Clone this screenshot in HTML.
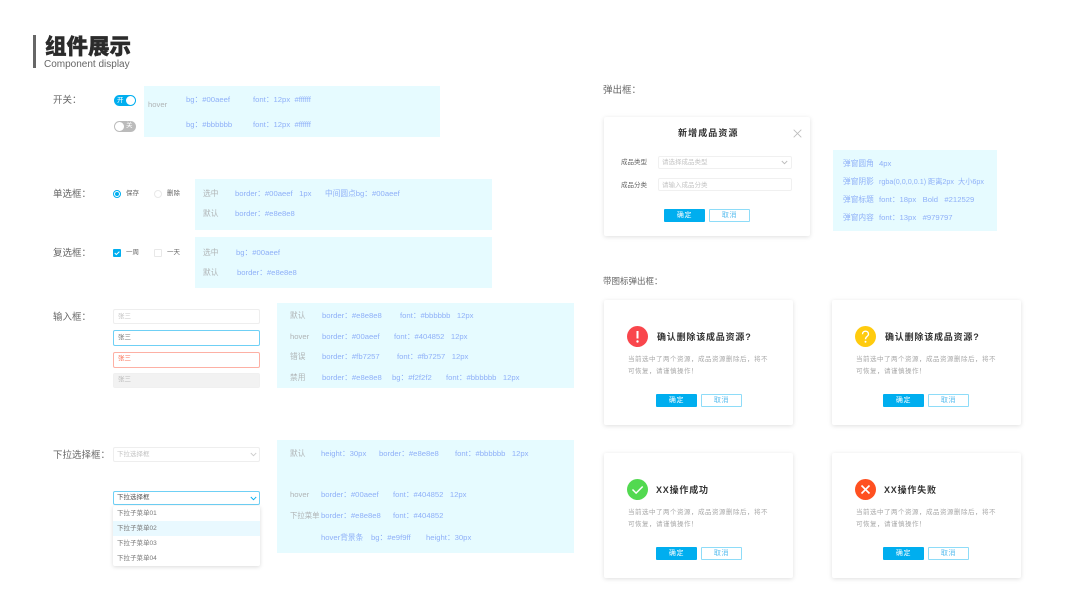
<!DOCTYPE html>
<html lang="zh"><head><meta charset="utf-8"><style>
html,body{margin:0;padding:0;background:#fff}
#p{position:relative;width:1067px;height:600px;overflow:hidden;background:#fff;font-family:"Liberation Sans","Noto Sans CJK SC",sans-serif}
#p div,#p svg{position:absolute;box-sizing:border-box}
.t{white-space:nowrap;line-height:12px;font-size:7.7px;color:#8fb0f8;letter-spacing:0}
.g{color:#b0b4b6}
.l{font-size:9.5px;color:#666;letter-spacing:0}
.s{font-size:6.5px;color:#666}
.pn{background:#e6fbff}
.i{left:113px;width:147px;border:1px solid #eee;border-radius:2px;background:#fff}
.card{background:#fff;border-radius:2px;box-shadow:0 1px 5px rgba(0,0,0,.13)}
.ok{background:#00aeef;border-radius:1px;color:#fff;font-size:7px;text-align:center;width:41px;height:13px;line-height:13px;letter-spacing:.6px}
.no{background:#fff;border:1px solid #8edcf8;border-radius:1px;color:#58bdef;font-size:7px;text-align:center;width:41px;height:13px;line-height:11px;letter-spacing:.6px}
.h{font-size:9px;font-weight:bold;color:#333;letter-spacing:.8px;white-space:nowrap;line-height:12px}
.b{font-size:6.5px;color:#a8a8a8;letter-spacing:.5px;line-height:11.5px;white-space:nowrap}
.c{border-radius:50%;width:21px;height:21px}
</style></head><body><div id="p">
<div style="left:33px;top:35px;width:3px;height:33px;background:#666"></div>
<div class="t" style="left:45px;top:35px;font-size:21.5px;line-height:24px;font-weight:900;color:#2b2b2b;-webkit-text-stroke:.4px #2b2b2b">组件展示</div>
<div class="t" style="left:44px;top:59px;font-size:10px;color:#666">Component display</div>

<div class="t l" style="left:53px;top:95px">开关：</div>
<div style="left:114px;top:95px;width:22px;height:11px;border-radius:6px;background:#00aeef"></div>
<div style="left:126px;top:96px;width:9px;height:9px;border-radius:50%;background:#fff"></div>
<div class="t" style="left:117px;top:95px;font-size:6.5px;color:#fff">开</div>
<div style="left:114px;top:121px;width:22px;height:11px;border-radius:6px;background:#bbb"></div>
<div style="left:115px;top:122px;width:9px;height:9px;border-radius:50%;background:#fff"></div>
<div class="t" style="left:126px;top:120px;font-size:6.5px;color:#fff">关</div>
<div class="pn" style="left:144px;top:86px;width:296px;height:51px"></div>
<div class="t g" style="left:148px;top:99px">hover</div>
<div class="t" style="left:186px;top:94px">bg：#00aeef</div><div class="t" style="left:253px;top:94px">font：12px&nbsp;&nbsp;#ffffff</div>
<div class="t" style="left:186px;top:119px">bg：#bbbbbb</div><div class="t" style="left:253px;top:119px">font：12px&nbsp;&nbsp;#ffffff</div>

<div class="t l" style="left:53px;top:189px">单选框：</div>
<div style="left:113px;top:190px;width:8px;height:8px;border:1px solid #00aeef;border-radius:50%"></div>
<div style="left:115px;top:192px;width:4px;height:4px;background:#00aeef;border-radius:50%"></div>
<div class="t s" style="left:126px;top:188px">保存</div>
<div style="left:154px;top:190px;width:8px;height:8px;border:1px solid #e8e8e8;border-radius:50%"></div>
<div class="t s" style="left:167px;top:188px">删除</div>
<div class="pn" style="left:195px;top:179px;width:297px;height:51px"></div>
<div class="t g" style="left:203px;top:188px">选中</div><div class="t" style="left:235px;top:188px">border：#00aeef&nbsp;&nbsp;&nbsp;1px</div><div class="t" style="left:325px;top:188px">中间圆点bg：#00aeef</div>
<div class="t g" style="left:203px;top:208px">默认</div><div class="t" style="left:235px;top:208px">border：#e8e8e8</div>

<div class="t l" style="left:53px;top:248px">复选框：</div>
<div style="left:113px;top:249px;width:8px;height:8px;background:#00aeef;border-radius:1px"></div>
<svg style="left:113px;top:249px" width="8" height="8" viewBox="0 0 8 8"><path d="M1.7 4l1.6 1.6L6.4 2.6" fill="none" stroke="#fff" stroke-width="1"/></svg>
<div class="t s" style="left:126px;top:247px">一周</div>
<div style="left:154px;top:249px;width:8px;height:8px;border:1px solid #e8e8e8;border-radius:1px"></div>
<div class="t s" style="left:167px;top:247px">一天</div>
<div class="pn" style="left:195px;top:237px;width:297px;height:51px"></div>
<div class="t g" style="left:203px;top:247px">选中</div><div class="t" style="left:236px;top:247px">bg：#00aeef</div>
<div class="t g" style="left:203px;top:267px">默认</div><div class="t" style="left:237px;top:267px">border：#e8e8e8</div>

<div class="t l" style="left:53px;top:312px">输入框：</div>
<div class="i" style="top:309px;height:15px"></div><div class="t" style="left:118px;top:311px;font-size:6.5px;color:#c4c4c4">张三</div>
<div class="i" style="top:330px;height:16px;border-color:#6fd0f5"></div><div class="t" style="left:118px;top:332px;font-size:6.5px;color:#777">张三</div>
<div class="i" style="top:352px;height:16px;border-color:#fdb0a4"></div><div class="t" style="left:118px;top:353px;font-size:6.5px;color:#fb7257">张三</div>
<div class="i" style="top:373px;height:15px;background:#f2f2f2;border-color:#f0f0f0"></div><div class="t" style="left:118px;top:374px;font-size:6.5px;color:#bbb">张三</div>
<div class="pn" style="left:277px;top:303px;width:297px;height:85px"></div>
<div class="t g" style="left:290px;top:310px">默认</div><div class="t" style="left:322px;top:310px">border：#e8e8e8</div><div class="t" style="left:400px;top:310px">font：#bbbbbb&nbsp;&nbsp;&nbsp;12px</div>
<div class="t g" style="left:290px;top:331px">hover</div><div class="t" style="left:322px;top:331px">border：#00aeef</div><div class="t" style="left:394px;top:331px">font：#404852&nbsp;&nbsp;&nbsp;12px</div>
<div class="t g" style="left:290px;top:351px">错误</div><div class="t" style="left:322px;top:351px">border：#fb7257</div><div class="t" style="left:397px;top:351px">font：#fb7257&nbsp;&nbsp;&nbsp;12px</div>
<div class="t g" style="left:290px;top:372px">禁用</div><div class="t" style="left:322px;top:372px">border：#e8e8e8</div><div class="t" style="left:392px;top:372px">bg：#f2f2f2</div><div class="t" style="left:446px;top:372px">font：#bbbbbb&nbsp;&nbsp;&nbsp;12px</div>

<div class="t l" style="left:53px;top:450px">下拉选择框：</div>
<div class="i" style="top:447px;height:15px"></div><div class="t" style="left:117px;top:449px;font-size:6.5px;color:#c4c4c4">下拉选择框</div>
<svg style="left:250px;top:452px" width="7" height="5" viewBox="0 0 7 5"><path d="M.8 1l2.7 2.7L6.2 1" fill="none" stroke="#ccc" stroke-width=".9"/></svg>
<div class="i" style="top:491px;height:14px;border-color:#6fd0f5"></div><div class="t" style="left:117px;top:492px;font-size:6.5px;color:#555">下拉选择框</div>
<svg style="left:250px;top:496px" width="7" height="5" viewBox="0 0 7 5"><path d="M.8 1l2.7 2.7L6.2 1" fill="none" stroke="#00aeef" stroke-width=".9"/></svg>
<div style="left:113px;top:506px;width:147px;height:60px;background:#fff;border-radius:2px;box-shadow:0 1px 4px rgba(0,0,0,.15)"></div>
<div style="left:113px;top:521px;width:147px;height:15px;background:#e9f9ff"></div>
<div class="t" style="left:117px;top:508px;font-size:6.5px;color:#777">下拉子菜单01</div>
<div class="t" style="left:117px;top:523px;font-size:6.5px;color:#777">下拉子菜单02</div>
<div class="t" style="left:117px;top:538px;font-size:6.5px;color:#777">下拉子菜单03</div>
<div class="t" style="left:117px;top:553px;font-size:6.5px;color:#777">下拉子菜单04</div>
<div class="pn" style="left:277px;top:440px;width:297px;height:113px"></div>
<div class="t g" style="left:290px;top:448px">默认</div><div class="t" style="left:321px;top:448px">height：30px</div><div class="t" style="left:379px;top:448px">border：#e8e8e8</div><div class="t" style="left:455px;top:448px">font：#bbbbbb&nbsp;&nbsp;&nbsp;12px</div>
<div class="t g" style="left:290px;top:489px">hover</div><div class="t" style="left:321px;top:489px">border：#00aeef</div><div class="t" style="left:393px;top:489px">font：#404852&nbsp;&nbsp;&nbsp;12px</div>
<div class="t g" style="left:290px;top:510px;font-size:7.4px">下拉菜单</div><div class="t" style="left:321px;top:510px">border：#e8e8e8</div><div class="t" style="left:393px;top:510px">font：#404852</div>
<div class="t" style="left:321px;top:532px">hover背景条</div><div class="t" style="left:371px;top:532px">bg：#e9f9ff</div><div class="t" style="left:426px;top:532px">height：30px</div>

<div class="t l" style="left:603px;top:85px">弹出框：</div>
<div class="card" style="left:604px;top:117px;width:206px;height:119px"></div>
<div class="t" style="left:678px;top:127px;font-size:9px;font-weight:bold;color:#333;letter-spacing:1.1px">新增成品资源</div>
<svg style="left:793px;top:129px" width="9" height="9" viewBox="0 0 9 9"><path d="M.7.7l7.6 7.6M8.3.7L.7 8.3" stroke="#bbb" stroke-width=".8"/></svg>
<div class="t s" style="left:621px;top:157px">成品类型</div>
<div class="i" style="left:658px;top:156px;width:134px;height:13px;border-color:#f0f0f0"></div>
<div class="t" style="left:662px;top:157px;font-size:6.5px;color:#c4c4c4">请选择成品类型</div>
<svg style="left:781px;top:160px" width="7" height="5" viewBox="0 0 7 5"><path d="M.8 1l2.7 2.7L6.2 1" fill="none" stroke="#bbb" stroke-width=".9"/></svg>
<div class="t s" style="left:621px;top:180px">成品分类</div>
<div class="i" style="left:658px;top:178px;width:134px;height:13px;border-color:#f0f0f0"></div>
<div class="t" style="left:662px;top:180px;font-size:6.5px;color:#c4c4c4">请输入成品分类</div>
<div class="ok" style="left:664px;top:209px">确定</div><div class="no" style="left:709px;top:209px">取消</div>
<div class="pn" style="left:833px;top:150px;width:164px;height:81px"></div>
<div class="t" style="left:843px;top:158px">弹窗圆角</div><div class="t" style="left:879px;top:158px">4px</div>
<div class="t" style="left:843px;top:176px">弹窗阴影</div><div class="t" style="left:879px;top:176px;font-size:7.2px">rgba(0,0,0,0.1)</div><div class="t" style="left:928px;top:176px;font-size:7.2px">距离2px</div><div class="t" style="left:958px;top:176px;font-size:7.2px">大小6px</div>
<div class="t" style="left:843px;top:194px">弹窗标题</div><div class="t" style="left:879px;top:194px">font：18px&nbsp;&nbsp;&nbsp;Bold&nbsp;&nbsp;&nbsp;#212529</div>
<div class="t" style="left:843px;top:212px">弹窗内容</div><div class="t" style="left:879px;top:212px">font：13px&nbsp;&nbsp;&nbsp;#979797</div>

<div class="t l" style="left:603px;top:275px;font-size:8.5px">带图标弹出框：</div>

<div class="card" style="left:604px;top:300px;width:189px;height:125px"></div>
<div class="c" style="left:627px;top:326px;background:#f9464c"></div>
<svg style="left:627px;top:326px" width="21" height="21" viewBox="0 0 21 21"><path d="M10.5 5v7.5" stroke="#fff" stroke-width="2"/><circle cx="10.5" cy="15.5" r="1.2" fill="#fff"/></svg>
<div class="h" style="left:657px;top:331px">确认删除该成品资源?</div>
<div class="b" style="left:628px;top:354px">当前选中了两个资源，成品资源删除后，将不<br>可恢复，请谨慎操作！</div>
<div class="ok" style="left:656px;top:394px">确定</div><div class="no" style="left:701px;top:394px">取消</div>

<div class="card" style="left:832px;top:300px;width:189px;height:125px"></div>
<div class="c" style="left:855px;top:326px;background:#ffcb0e"></div>
<svg style="left:855px;top:326px" width="21" height="21" viewBox="0 0 21 21"><path d="M7.5 8.2c0-4 6-4 6 0 0 2.2-3 2.2-3 5" fill="none" stroke="#fff" stroke-width="1.4"/><circle cx="10.5" cy="15.8" r="1" fill="#fff"/></svg>
<div class="h" style="left:885px;top:331px">确认删除该成品资源?</div>
<div class="b" style="left:856px;top:354px">当前选中了两个资源，成品资源删除后，将不<br>可恢复，请谨慎操作！</div>
<div class="ok" style="left:883px;top:394px">确定</div><div class="no" style="left:928px;top:394px">取消</div>

<div class="card" style="left:604px;top:453px;width:189px;height:125px"></div>
<div class="c" style="left:627px;top:479px;background:#52d950"></div>
<svg style="left:627px;top:479px" width="21" height="21" viewBox="0 0 21 21"><path d="M5.5 10.5l3.6 3.6 6.6-6.6" fill="none" stroke="#fff" stroke-width="1.5"/></svg>
<div class="h" style="left:656px;top:484px">XX操作成功</div>
<div class="b" style="left:628px;top:507px">当前选中了两个资源，成品资源删除后，将不<br>可恢复，请谨慎操作！</div>
<div class="ok" style="left:656px;top:547px">确定</div><div class="no" style="left:701px;top:547px">取消</div>

<div class="card" style="left:832px;top:453px;width:189px;height:125px"></div>
<div class="c" style="left:855px;top:479px;background:#ff5020"></div>
<svg style="left:855px;top:479px" width="21" height="21" viewBox="0 0 21 21"><path d="M6.5 6.5l8 8M14.5 6.5l-8 8" fill="none" stroke="#fff" stroke-width="1.6"/></svg>
<div class="h" style="left:884px;top:484px">XX操作失败</div>
<div class="b" style="left:856px;top:507px">当前选中了两个资源，成品资源删除后，将不<br>可恢复，请谨慎操作！</div>
<div class="ok" style="left:883px;top:547px">确定</div><div class="no" style="left:928px;top:547px">取消</div>
</div></body></html>
